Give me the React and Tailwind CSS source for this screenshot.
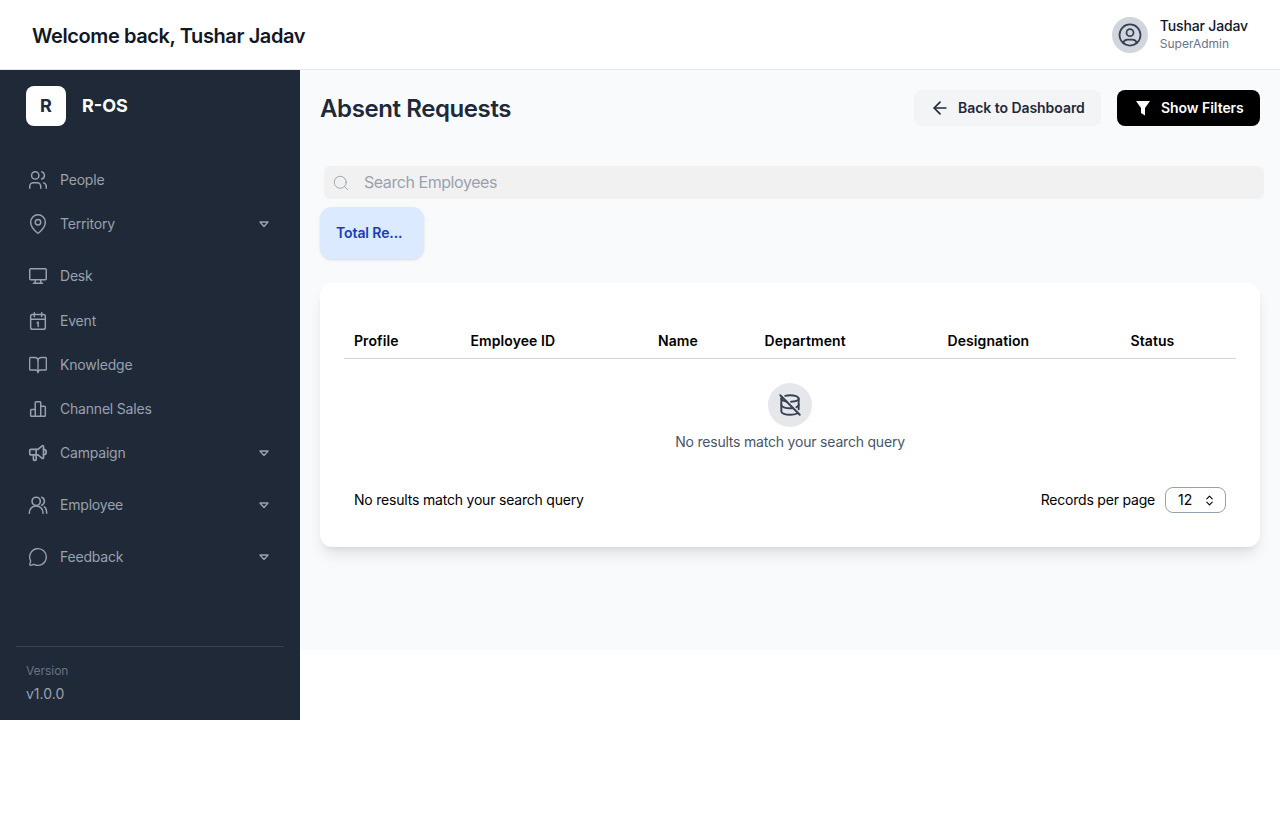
import { ArrowLeft, BookOpen, ChevronsUpDown, MapPin, MessageCircle, Search } from "lucide-react";
import { TbDatabaseOff, TbSpeakerphone, TbUsers, TbDeviceDesktop, TbUserCircle } from "react-icons/tb";

const Caret = () => (
  <svg width="10" height="7" viewBox="0 0 10 7" className="text-gray-400">
    <path d="M1 1h8L5 5.5z" fill="none" stroke="currentColor" strokeWidth="1.4" strokeLinejoin="round" />
  </svg>
);

// calendar with a "1" on it, the icon sets only have a dot or square here
const CalendarOne = () => (
  <svg width="22" height="22" viewBox="0 0 24 24" fill="none" stroke="currentColor" strokeWidth="1.6" strokeLinecap="round" strokeLinejoin="round">
    <rect x="4" y="5" width="16" height="16" rx="2" />
    <path d="M8 3v4M16 3v4M4 10h16M11 14l1.2-.8V18" />
  </svg>
);

const ChannelBars = () => (
  <svg width="22" height="22" viewBox="0 0 24 24" fill="none" stroke="currentColor" strokeWidth="1.6" strokeLinejoin="round">
    <path d="M4 13.5a1 1 0 0 1 1-1h4V20H5a1 1 0 0 1-1-1zM9 5a1 1 0 0 1 1-1h4a1 1 0 0 1 1 1v15H9zM15 9h4a1 1 0 0 1 1 1v9a1 1 0 0 1-1 1h-4z" />
  </svg>
);

const EmployeeIcon = () => (
  <svg width="22" height="22" viewBox="0 0 24 24" fill="none" stroke="currentColor" strokeWidth="1.7" strokeLinecap="round" strokeLinejoin="round">
    <circle cx="10" cy="8" r="4.5" />
    <path d="M2.5 21c0-4.5 3-8 7.5-8s7.5 3.5 7.5 8M16 3.5c2 .8 3 2.5 3 4.5s-1 3.4-3 4.2M19 14c1.6 1.2 2.5 3.5 2.5 7" />
  </svg>
);

const Funnel = () => (
  <svg width="20" height="20" viewBox="0 0 20 20" fill="currentColor">
    <path d="M3 3h14l-5 7v7.5l-4-2.5v-5z" />
  </svg>
);

const navItems = [
  { label: "People", icon: <TbUsers size={22} strokeWidth={1.6} /> },
  { label: "Territory", icon: <MapPin size={22} strokeWidth={1.6} />, caret: true },
  { label: "Desk", icon: <TbDeviceDesktop size={22} strokeWidth={1.6} />, extra: true },
  { label: "Event", icon: <CalendarOne /> },
  { label: "Knowledge", icon: <BookOpen size={20} strokeWidth={1.6} /> },
  { label: "Channel Sales", icon: <ChannelBars /> },
  { label: "Campaign", icon: <TbSpeakerphone size={22} strokeWidth={1.8} />, caret: true },
  { label: "Employee", icon: <EmployeeIcon />, caret: true },
  { label: "Feedback", icon: <MessageCircle size={20} strokeWidth={1.6} />, caret: true },
];

const columns = [
  { label: "Profile", width: "w-[116.5px]" },
  { label: "Employee ID", width: "w-[187.5px]" },
  { label: "Name", width: "w-[106.5px]" },
  { label: "Department", width: "w-[183px]" },
  { label: "Designation", width: "w-[183px]" },
  { label: "Status", width: "flex-1" },
];

const Sidebar = () => (
  <aside className="w-[300px] h-[650px] shrink-0 bg-[#1f2937] flex flex-col">
    <div className="flex items-center gap-4 pl-[26px] pt-4">
      <div className="w-10 h-10 bg-white rounded-lg flex items-center justify-center text-[#1f2937] font-bold text-lg">R</div>
      <span className="text-white font-bold text-lg">R-OS</span>
    </div>
    <nav className="mt-[32px] pl-[27px] pr-7 flex-1">
      {navItems.map((item) => (
        <div key={item.label} className={`flex items-center h-[44px] text-gray-400 ${item.caret ? "mb-2" : ""} ${item.extra ? "mb-px" : ""}`}>
          <span className="w-[22px] mr-[11px] flex justify-center">{item.icon}</span>
          <span className="text-sm tracking-[-0.2px] flex-1">{item.label}</span>
          {item.caret && <span className="mr-[3px] mt-px flex"><Caret /></span>}
        </div>
      ))}
    </nav>
    <div className="mx-4 border-t border-gray-700 pt-4 pl-[10px] pb-4">
      <p className="text-xs text-gray-500 tracking-[-0.05px]">Version</p>
      <p className="text-sm text-gray-400 mt-[5px]">v1.0.0</p>
    </div>
  </aside>
);

export default function App() {
  return (
    <div className="font-['Inter',sans-serif]">
      <header className="h-[70px] bg-white border-b border-gray-200 flex items-center justify-between px-8">
        <h1 className="mt-0.5 text-xl font-semibold text-gray-900 tracking-[-0.4px]">Welcome back, Tushar Jadav</h1>
        <div className="flex items-center gap-3">
          <div className="w-9 h-9 rounded-full bg-gray-300 flex items-center justify-center text-gray-700">
            <TbUserCircle size={28} strokeWidth={1.5} />
          </div>
          <div className="mb-0.5">
            <p className="text-sm font-medium text-gray-900 leading-5 tracking-[-0.15px]">Tushar Jadav</p>
            <p className="text-xs text-gray-500 leading-4">SuperAdmin</p>
          </div>
        </div>
      </header>

      <div className="flex items-start">
        <Sidebar />
        <main className="flex-1 h-[580px] bg-gray-50 px-5 pt-5">
          <div className="flex items-center justify-between h-9">
            <h2 className="mt-0.5 text-2xl font-semibold text-gray-800 tracking-[-0.4px]">Absent Requests</h2>
            <div className="flex items-center gap-4">
              <button className="h-9 w-[187px] pl-4 bg-gray-100 rounded-lg flex items-center gap-2 text-sm font-semibold text-gray-800 tracking-[-0.05px]">
                <ArrowLeft size={20} />
                Back to Dashboard
              </button>
              <button className="h-9 w-[143px] pl-4 bg-black rounded-lg flex items-center gap-2 text-sm font-semibold text-white tracking-[-0.05px]">
                <Funnel />
                Show Filters
              </button>
            </div>
          </div>

          <div className="ml-1 -mr-1 mt-10 h-[33px] bg-[#f1f1f1] rounded-md flex items-center pl-2">
            <Search size={18} strokeWidth={1.25} className="text-gray-400" />
            <span className="ml-3.5 mb-0.5 text-base text-gray-400 tracking-[-0.44px]">Search Employees</span>
          </div>

          <div className="mt-2 w-[104px] h-[52px] bg-blue-100 rounded-xl shadow-sm flex items-center pl-4 text-sm font-semibold text-blue-800 tracking-[-0.1px]">
            Total Re...
          </div>

          <section className="mt-6 h-[264px] bg-white rounded-xl shadow-lg px-6">
            <div className="pt-[48px] flex h-[76px] border-b border-gray-300 text-sm font-semibold text-black tracking-[0.08px]">
              {columns.map((col) => (
                <div key={col.label} className={`${col.width} pl-[10px]`}>{col.label}</div>
              ))}
            </div>
            <div className="flex flex-col items-center pt-6">
              <div className="w-11 h-11 rounded-full bg-gray-200 flex items-center justify-center text-gray-700">
                <TbDatabaseOff size={26} strokeWidth={1.75} />
              </div>
              <p className="mt-[5px] text-sm text-gray-600 tracking-[-0.2px]">No results match your search query</p>
            </div>
            <div className="mt-[35px] flex items-center justify-between px-[10px]">
              <p className="text-sm text-black tracking-[-0.2px]">No results match your search query</p>
              <div className="flex items-center gap-[10px]">
                <span className="text-sm text-black tracking-[-0.2px]">Records per page</span>
                <div className="w-[61px] h-[26px] border border-gray-400 rounded-lg flex items-center justify-between pl-3 pr-[9px] text-sm text-black">
                  12
                  <ChevronsUpDown size={13} strokeWidth={2} />
                </div>
              </div>
            </div>
          </section>
        </main>
      </div>
    </div>
  );
}
